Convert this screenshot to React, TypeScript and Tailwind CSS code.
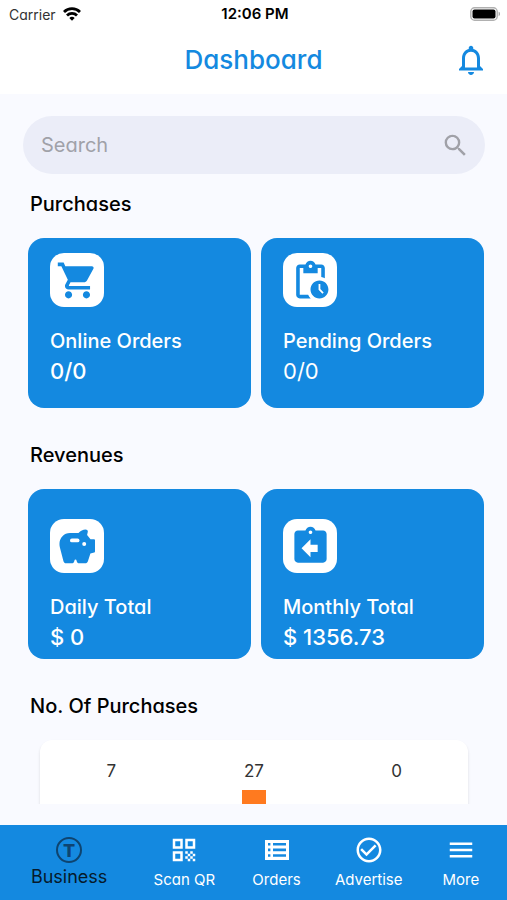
import React from "react";
import {
  MdAssignmentReturn,
  MdCheckCircleOutline,
  MdMenu,
  MdNotificationsNone,
  MdPendingActions,
  MdQrCode,
  MdSearch,
  MdShoppingCart,
} from "react-icons/md";

type statCard = {
  title: string;
  value: string;
  icon: React.ReactNode;
  light?: boolean;
};

function WifiIcon() {
  return (
    <svg width="18" height="14" viewBox="0 0 18 14" fill="none" stroke="black" strokeWidth="2.8">
      <path d="M1 5a11.3 11.3 0 0 1 16 0" />
      <path d="M4 8.5a7.1 7.1 0 0 1 10 0" />
      <path d="M9 13.8 6.3 11a3.9 3.9 0 0 1 5.4 0z" fill="black" stroke="none" />
    </svg>
  );
}

function BatteryIcon() {
  return (
    <svg width="31" height="14" viewBox="0 0 31 14">
      <rect x="0.8" y="0.8" width="26.4" height="12.4" rx="3.8" fill="white" stroke="#b0b0b0" strokeWidth="1.4" />
      <rect x="2.5" y="2.5" width="23" height="9" rx="2" fill="black" />
      <path d="M28.6 4.8c1.9.5 1.9 3.9 0 4.4z" fill="#a8a8a8" />
    </svg>
  );
}

function PiggyIcon() {
  return (
    <svg width="36" height="35" viewBox="0 0 36 35">
      <path
        fill="currentColor"
        d="M11 4h8.500C21.500 1.800 24 .5 26.500.5c1.800 0 2.700 1.200 2.200 2.800l-.6 2.800 3.400 4.200h3.400c.6 0 1.100.5 1.100 1.100v11c0 .6-.3 1-.8 1.200L31.400 24.600l-2.400 7.400c-.5 1.500-1.500 2.300-2.900 2.300h-5.600c-1.700 0-2.700-1-2.900-2.600-.1-.8-.5-1.200-1.100-1.200s-1 .4-1.100 1.200c-.2 1.600-1.200 2.600-2.900 2.600H7.200c-1.400 0-2.400-.8-2.800-2.300L.9 18.500C-1.100 10.500 4 4 11 4z"
      />
      <rect x="11" y="9.500" width="9.500" height="3.800" rx="1.900" fill="white" />
      <circle cx="25.200" cy="15" r="2" fill="white" />
    </svg>
  );
}

function ListIcon() {
  return (
    <svg width="24" height="20" viewBox="0 0 24 20" fill="currentColor">
      <path
        fillRule="evenodd"
        d="M0 0h24v20H0zM3 3v2.6h2.4V3zm5 0v2.6h13V3zM3 8.6v2.6h2.4V8.6zm5 0v2.6h13V8.6zM3 14.2v2.6h2.4v-2.6zm5 0v2.6h13v-2.6z"
      />
    </svg>
  );
}

const purchases: statCard[] = [
  { title: "Online Orders", value: "0/0", icon: <MdShoppingCart size={43} /> },
  { title: "Pending Orders", value: "0/0", icon: <MdPendingActions size={43} />, light: true },
];

const revenues: statCard[] = [
  { title: "Daily Total", value: "$ 0", icon: <PiggyIcon /> },
  { title: "Monthly Total", value: "$ 1356.73", icon: <MdAssignmentReturn size={43} /> },
];

const chartData = [
  { id: "first", count: 7 },
  { id: "second", count: 27 },
  { id: "third", count: 0 },
];

const navItems = [
  { label: "Scan QR", icon: <MdQrCode size={30} /> },
  { label: "Orders", icon: <ListIcon /> },
  { label: "Advertise", icon: <MdCheckCircleOutline size={30} /> },
  { label: "More", icon: <MdMenu size={30} /> },
];

function StatCard({ card, low }: { card: statCard; low?: boolean }) {
  return (
    <div className={`h-[170px] rounded-2xl bg-[#1489e0] px-[22px] text-white ${low ? "pt-[30px]" : "pt-[15px]"}`}>
      <div className="flex h-[54px] w-[54px] items-center justify-center rounded-[14px] bg-white text-[#1489e0]">
        {card.icon}
      </div>
      <h3 className="mt-[19px] text-[20px] leading-[30px] font-medium">{card.title}</h3>
      <p className={`text-[22px] leading-[30px] ${card.light ? "font-normal" : "font-medium"}`}>{card.value}</p>
    </div>
  );
}

export default function App() {
  return (
    <div className="flex h-screen flex-col bg-[#f9faff] font-['Inter',sans-serif] [font-feature-settings:'cv11']">
      <header className="bg-white">
        <div className="grid h-7 grid-cols-3 items-center pr-[6px] pl-[9px]">
          <div className="flex items-center gap-[7px] text-[14px] text-[#333]">
            Carrier
            <WifiIcon />
          </div>
          <span className="text-center text-[15px] font-semibold text-black">12:06 PM</span>
          <div className="flex justify-end">
            <BatteryIcon />
          </div>
        </div>
        <div className="grid h-[66px] grid-cols-[1fr_auto_1fr] items-center px-[18px] pb-[2px]">
          <h1 className="col-start-2 text-[26px] leading-8 font-medium text-[#1489e0]">Dashboard</h1>
          <button type="button" aria-label="Notifications" className="justify-self-end text-[#1489e0]">
            <MdNotificationsNone size={36} />
          </button>
        </div>
      </header>

      <div className="mt-[22px] mr-[22px] ml-[23px] flex h-[58px] shrink-0 items-center rounded-full bg-[#ebedf8] pr-[15px] pl-[18px] text-[#a0a1a8]">
        <input
          type="text"
          aria-label="Search"
          placeholder="Search"
          className="min-w-0 flex-1 bg-transparent text-[20px] outline-none placeholder:text-[#a0a1a8]"
        />
        <button type="button" aria-label="Submit search">
          <MdSearch size={29} />
        </button>
      </div>

      <main className="mb-[21px] min-h-0 flex-1 overflow-y-auto pr-[23px] pl-7 [scrollbar-width:none]">
        <h2 className="mt-[15px] px-[2px] text-[20px] leading-[30px] font-medium">Purchases</h2>
        <div className="mt-[19px] grid grid-cols-2 gap-[10px]">
          {purchases.map((card) => (
            <StatCard key={card.title} card={card} />
          ))}
        </div>

        <h2 className="mt-8 px-[2px] text-[20px] leading-[30px] font-medium">Revenues</h2>
        <div className="mt-[19px] grid grid-cols-2 gap-[10px]">
          {revenues.map((card) => (
            <StatCard key={card.title} card={card} low />
          ))}
        </div>

        <h2 className="mt-8 px-[2px] text-[20px] leading-[30px] font-medium">No. Of Purchases</h2>
        <div className="mx-3 mt-[19px] mr-4 grid h-[240px] grid-cols-3 rounded-xl bg-white pt-[19px] pb-5 shadow-[0_2px_3px_#0000001f]">
          {chartData.map((item) => (
            <div key={item.id} className="flex flex-col items-center justify-between">
              <span className="text-[17px] leading-6 text-[#333]">{item.count}</span>
              <div className="w-6 bg-[#ff7a1f]" style={{ height: `${(item.count / 27) * 170}px` }}></div>
            </div>
          ))}
        </div>
      </main>

      <nav className="grid h-[75px] shrink-0 grid-cols-[3fr_2fr_2fr_2fr_2fr] bg-[#1489e0] text-white">
        <button type="button" className="flex flex-col items-center pt-3 text-[#061a2b]">
          <span className="flex h-[26px] w-[26px] items-center justify-center rounded-full border-2 border-[#0e4470] text-[18px] font-extrabold text-[#0e4470]">
            T
          </span>
          <span className="text-[18px] leading-7">Business</span>
        </button>
        {navItems.map((item) => (
          <button type="button" key={item.label} className="flex flex-col items-center pt-[10px]">
            <span className="flex h-[30px] items-center">{item.icon}</span>
            <span className="text-[15px] leading-[30px]">{item.label}</span>
          </button>
        ))}
      </nav>
    </div>
  );
}
